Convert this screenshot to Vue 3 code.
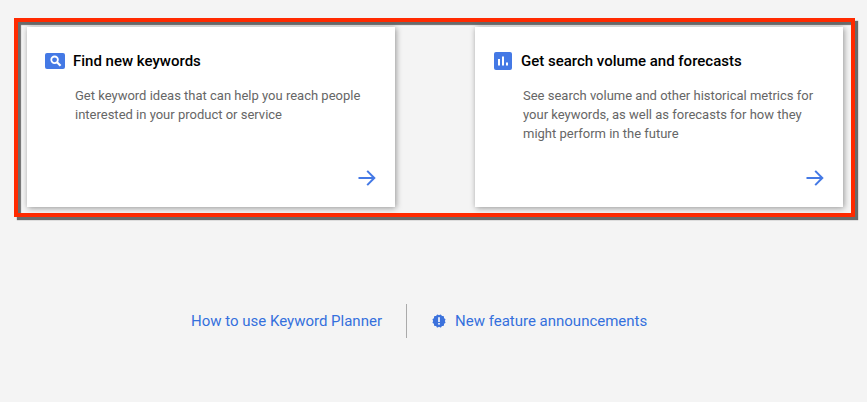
<script setup>
const cards = [
  { title: 'Find new keywords', icon: 'search', lines: ['Get keyword ideas that can help you reach people', 'interested in your product or service'] },
  { title: 'Get search volume and forecasts', icon: 'bars', lines: ['See search volume and other historical metrics for', 'your keywords, as well as forecasts for how they', 'might perform in the future'] },
]
const sealAngles = [0, 30, 60]
</script>

<template>
  <main class="page">
    <section class="frame">
      <article v-for="card in cards" :key="card.title" class="card">
        <header class="head">
          <span class="badge-slot">
            <svg v-if="card.icon === 'search'" width="20" height="16" viewBox="0 0 20 16">
              <rect width="20" height="16" rx="2" fill="#4479e5" />
              <g fill="none" stroke="#fff">
                <circle cx="9.600" cy="6.800" r="3.300" stroke-width="1.800" />
                <path d="M12 9.200l3.600 3.600" stroke-width="2.200" />
              </g>
            </svg>
            <svg v-else width="18" height="18" viewBox="0 0 18 18">
              <rect width="18" height="18" rx="2" fill="#4479e5" />
              <g fill="#fff">
                <rect x="4" y="7" width="2" height="6.500" />
                <rect x="8" y="4.500" width="2" height="9" />
                <rect x="12" y="10.500" width="2" height="3" />
              </g>
            </svg>
          </span>
          <h2 class="title">{{ card.title }}</h2>
        </header>
        <p class="desc"><span v-for="line in card.lines" :key="line" class="line">{{ line }}</span></p>
        <svg class="arrow" width="18" height="16" viewBox="0 0 18 16" fill="none" stroke="#4479e5" stroke-width="2">
          <path d="M0.500 8H16.300M9.200 0.900L16.300 8L9.200 15.100" />
        </svg>
      </article>
    </section>
    <nav class="links">
      <a class="link">How to use Keyword Planner</a>
      <span class="divider"></span>
      <a class="link">
        <svg width="14" height="14" viewBox="0 0 14 14">
          <rect v-for="a in sealAngles" :key="a" x="2" y="2" width="10" height="10" rx="1" fill="#3c72dc" :transform="`rotate(${a} 7 7)`" />
          <rect x="6.200" y="3.200" width="1.600" height="4.800" fill="#fff" />
          <rect x="6.200" y="9" width="1.600" height="1.600" fill="#fff" />
        </svg>
        New feature announcements
      </a>
    </nav>
  </main>
</template>

<style scoped>
.page {
  box-sizing: border-box;
  width: 867px;
  height: 402px;
  padding: 18px 12px 0 14px;
  background: #f4f4f4;
  font-family: Roboto, "Liberation Sans", sans-serif;
  overflow: hidden;
}
.frame {
  box-sizing: border-box;
  width: 841px;
  height: 199px;
  padding: 5px 8px 6px 9px;
  display: flex;
  gap: 80px;
  border: 4px solid #ff2a00;
  box-shadow: 3px 3px 1px #6a6a6a, inset 3px 3px 1px #6a6a6a;
}
.card {
  position: relative;
  box-sizing: border-box;
  width: 368px;
  padding: 25px 18px 0;
  background: #fff;
  box-shadow: 1px 1px 6px rgba(0, 0, 0, 0.4);
}
.head {
  display: flex;
  align-items: center;
  height: 18px;
}
.badge-slot {
  flex: none;
  width: 28px;
  box-sizing: border-box;
  padding-right: 8px;
  display: flex;
  justify-content: center;
}
.title {
  margin: 0;
  font-size: 15px;
  font-weight: 500;
  color: #000;
}
.desc {
  margin: 16px 0 0 30px;
  font-size: 13px;
  line-height: 19px;
  color: #666;
}
.line { display: block; white-space: nowrap; }
.arrow {
  position: absolute;
  right: 19px;
  bottom: 21px;
}
.links {
  display: flex;
  align-items: center;
  height: 34px;
  margin-top: 87px;
  padding-left: 177px;
}
.link {
  display: flex;
  align-items: center;
  gap: 9px;
  font-size: 15px;
  color: #3470dd;
}
.divider {
  width: 1px;
  height: 34px;
  margin: 0 25px 0 24px;
  background: #aaa;
}
</style>
